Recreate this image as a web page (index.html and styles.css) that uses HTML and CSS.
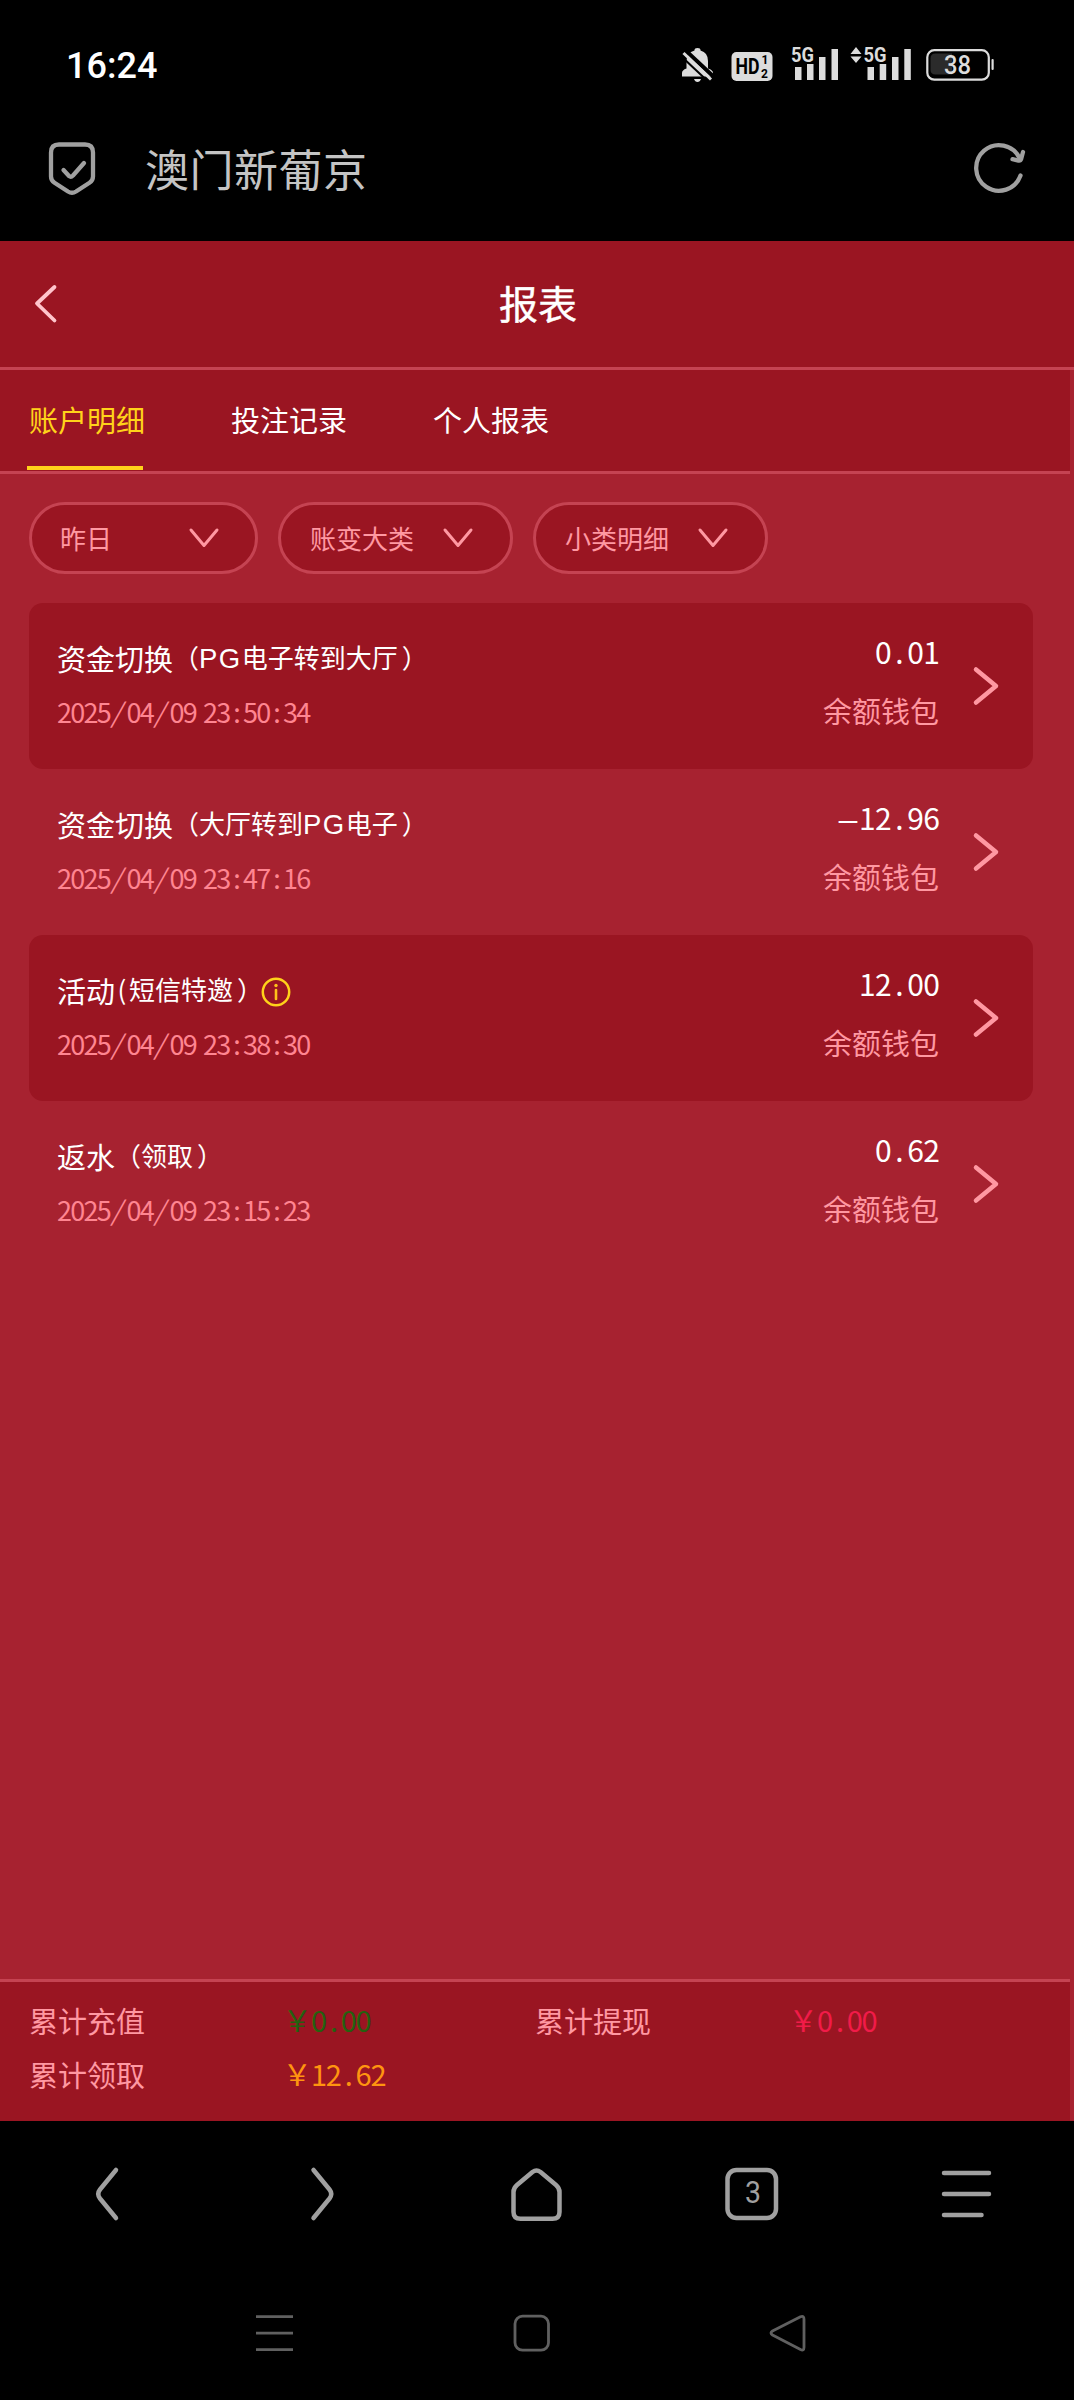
FILE: index.html
```html
<!DOCTYPE html>
<html lang="zh-CN">
<head>
<meta charset="utf-8">
<title>报表</title>
<link rel="stylesheet" href="styles.css">
</head>
<body>
<div class="status">
  <span class="clock">16:24</span>
  <svg class="status-icons" width="320" height="40" viewBox="680 44 320 40">
    <g fill="#dcdcdc">
      <path d="M682 76.500V73q0-3 4.500-4.500V61q0-8.500 8-10.500v-.5a3 2 0 0 1 6 0v.5q7.500 2 7.500 10.500v7.500q5 1.500 5 4.500v3.500zM694 79h7q-1 3-3.500 3t-3.500-3z"/>
      <path d="M684 49L715 78" stroke="#000" stroke-width="4"/>
      <path d="M682 57L707 80.500" stroke="#000" stroke-width="2"/>
      <path d="M683.500 53L711 79.500" stroke="#dcdcdc" stroke-width="3"/>
      <rect x="731.500" y="52" width="41" height="29" rx="5"/>
      <path d="M795 67h6.500v13H795zM807 64h6.500v16H807zM819 57h6.500v23H819zM831.500 49h6.500v31h-6.500zM867.500 67h6.500v13h-6.500zM879.700 64h6.500v16h-6.500zM892 57h6.500v23H892zM904.300 49h6.500v31h-6.500zM850.500 54l5.500-7 5.500 7zM850.500 56.500h11l-5.500 6.500z"/>
    </g>
    <g class="icon-text" fill="#dcdcdc">
      <text x="735.500" y="74" font-size="22" font-weight="700" fill="#000" textLength="24" lengthAdjust="spacingAndGlyphs">HD</text>
      <text x="761.500" y="64" font-size="12" font-weight="700" fill="#000">1</text>
      <text x="761" y="77.500" font-size="12" font-weight="700" fill="#000">2</text>
      <text x="791" y="61.500" font-size="21" font-weight="700" textLength="23" lengthAdjust="spacingAndGlyphs">5G</text>
      <text x="863.500" y="61.500" font-size="21" font-weight="700" textLength="23" lengthAdjust="spacingAndGlyphs">5G</text>
    </g>
    <rect x="927.300" y="50.200" width="61.500" height="29.500" rx="7" fill="none" stroke="#dcdcdc" stroke-width="2.200"/>
    <path d="M952 53.500v21h-16.500q-5 0-5-5v-11q0-5 5-5z" fill="#2b2b2b"/>
    <rect x="991.500" y="59" width="2.200" height="11" rx="1" fill="#dcdcdc"/>
    <text class="icon-text" x="944" y="73.500" font-size="25" font-weight="500" fill="#dcdcdc" textLength="27" lengthAdjust="spacingAndGlyphs">38</text>
  </svg>
</div>
<div class="address">
  <svg class="shield" width="54" height="60" viewBox="0 0 54 60" fill="none" stroke="#a0a0a0" stroke-width="4.300" stroke-linecap="round" stroke-linejoin="round">
    <path d="M13 5.500h26q8 0 8 8v24q0 4-3.500 6.200L30 52.500q-4 2.400-8 0L8.500 43.700Q5 41.500 5 37.500v-24q0-8 8-8z"/>
    <path d="M17.500 31l5.500 6q2 1.500 4-.5L38 24"/>
  </svg>
  <span class="site">澳门新葡京</span>
  <svg class="reload" width="60" height="60" viewBox="0 0 60 60" fill="none" stroke="#a0a0a0" stroke-width="4.300" stroke-linecap="round" stroke-linejoin="round">
    <path d="M51.500 37.500A22.800 22.800 0 1 1 50.500 20"/>
    <path d="M43.500 21.200l6 1.400q2 .3 2.600-1.500L54 14"/>
  </svg>
</div>
<main class="page">
  <header class="titlebar">
    <svg class="back" width="30" height="44" viewBox="0 0 30 44" fill="none" stroke="#ffc5cc" stroke-width="3.800" stroke-linecap="round" stroke-linejoin="round"><path d="M25.500 5L8 21.500 25.500 38.500"/></svg>
    <h1>报表</h1>
  </header>
  <nav class="tabs">
    <a class="tab active">账户明细</a>
    <a class="tab">投注记录</a>
    <a class="tab">个人报表</a>
  </nav>
  <div class="filters">
    <button class="pill short"><span>昨日</span><svg width="34" height="24" viewBox="0 0 34 24"><path d="M4 4l13 15.500L30 4"/></svg></button>
    <button class="pill"><span>账变大类</span><svg width="34" height="24" viewBox="0 0 34 24"><path d="M4 4l13 15.500L30 4"/></svg></button>
    <button class="pill"><span>小类明细</span><svg width="34" height="24" viewBox="0 0 34 24"><path d="M4 4l13 15.500L30 4"/></svg></button>
  </div>
  <section class="list">
    <article class="row dark">
      <div class="what">
        <div class="name">资金切换<small>（<span class="latin">PG</span>电子转到大厅<span class="close">）</span></small></div>
        <div class="time">2025<i class="sl">/</i>04<i class="sl">/</i>09<i class="sp"> </i>23<i class="co">:</i>50<i class="co">:</i>34</div>
      </div>
      <div class="sum"><div class="amount">0<i>.</i>01</div><div class="wallet">余额钱包</div></div>
      <svg class="go" width="34" height="46" viewBox="0 0 34 46"><path d="M7 6.500L27 23 7 39.500"/></svg>
    </article>
    <article class="row">
      <div class="what">
        <div class="name">资金切换<small>（大厅转到<span class="latin">PG</span>电子<span class="close">）</span></small></div>
        <div class="time">2025<i class="sl">/</i>04<i class="sl">/</i>09<i class="sp"> </i>23<i class="co">:</i>47<i class="co">:</i>16</div>
      </div>
      <div class="sum"><div class="amount"><b>–</b>12<i>.</i>96</div><div class="wallet">余额钱包</div></div>
      <svg class="go" width="34" height="46" viewBox="0 0 34 46"><path d="M7 6.500L27 23 7 39.500"/></svg>
    </article>
    <article class="row dark">
      <div class="what">
        <div class="name">活动<small><span class="open">(</span>短信特邀<span class="close">）</span></small><svg class="info" width="30" height="30" viewBox="0 0 30 30"><circle cx="15" cy="15" r="13.200" fill="none" stroke="#ffd21a" stroke-width="2.500"/><path d="M15 13v9" stroke="#ffc21a" stroke-width="2.600" stroke-linecap="round"/><circle cx="15" cy="8.500" r="1.700" fill="#ffc21a"/></svg></div>
        <div class="time">2025<i class="sl">/</i>04<i class="sl">/</i>09<i class="sp"> </i>23<i class="co">:</i>38<i class="co">:</i>30</div>
      </div>
      <div class="sum"><div class="amount">12<i>.</i>00</div><div class="wallet">余额钱包</div></div>
      <svg class="go" width="34" height="46" viewBox="0 0 34 46"><path d="M7 6.500L27 23 7 39.500"/></svg>
    </article>
    <article class="row">
      <div class="what">
        <div class="name">返水<small>（领取<span class="close">）</span></small></div>
        <div class="time">2025<i class="sl">/</i>04<i class="sl">/</i>09<i class="sp"> </i>23<i class="co">:</i>15<i class="co">:</i>23</div>
      </div>
      <div class="sum"><div class="amount">0<i>.</i>62</div><div class="wallet">余额钱包</div></div>
      <svg class="go" width="34" height="46" viewBox="0 0 34 46"><path d="M7 6.500L27 23 7 39.500"/></svg>
    </article>
  </section>
  <footer class="totals">
    <span>累计充值</span><span class="money green"><b>￥</b>0<i>.</i>00</span>
    <span>累计提现</span><span class="money pink"><b>￥</b>0<i>.</i>00</span>
    <span>累计领取</span><span class="money orange"><b>￥</b>12<i>.</i>62</span>
  </footer>
</main>
<nav class="toolbar">
  <svg width="60" height="60" viewBox="0 0 60 60"><path d="M39 6L23 25.500q-3.500 4.500 0 9L39 54"/></svg>
  <svg width="60" height="60" viewBox="0 0 60 60"><path d="M21.500 6l16 19.500q3.500 4.500 0 9L21.500 54"/></svg>
  <svg width="60" height="60" viewBox="0 0 60 60"><path d="M25.500 8q4-3 8 0L49 21q3.500 3 3.500 7v20q0 6.800-7 6.800h-32q-7 0-7-6.800V28q0-4 3.500-7z"/></svg>
  <svg width="60" height="60" viewBox="0 0 60 60"><rect x="5.500" y="6" width="48.500" height="48" rx="9"/><text class="icon-text count" x="31" y="39" font-size="31" font-weight="400" text-anchor="middle" textLength="16" lengthAdjust="spacingAndGlyphs">3</text></svg>
  <svg width="60" height="60" viewBox="0 0 60 60"><path d="M7 9h45M7 30h45M7 51h37.500"/></svg>
</nav>
<nav class="sysnav">
  <svg width="44" height="44" viewBox="0 0 44 44"><path d="M4 5.700h37M4 22.200h37M4 38.700h37"/></svg>
  <svg width="44" height="44" viewBox="0 0 44 44"><rect x="6" y="5.200" width="33.500" height="34" rx="7.500"/></svg>
  <svg width="44" height="44" viewBox="0 0 44 44"><path d="M34.500 5.700q3.500-1.500 3.500 2.500v28q0 4-3.500 2.300L6.500 24q-3-2 0-4z"/></svg>
</nav>
</body>
</html>
```
FILE: styles.css
```css
* { box-sizing: border-box; }
body {
  margin: 0;
  width: 1074px;
  height: 2400px;
  background: #000;
  color: #fff;
  font-family: "Noto Sans CJK SC", sans-serif;
  display: flex;
  flex-direction: column;
  overflow: hidden;
}
svg { display: block; flex: none; }
i, b { font-style: normal; font-weight: inherit; }
.icon-text { font-family: Roboto, sans-serif; }

.status {
  height: 128px;
  padding: 0 74px 0 66px;
  display: flex;
  justify-content: space-between;
}
.clock {
  font: 500 36px/42px Roboto, sans-serif;
  padding-top: 45px;
}
.status-icons { margin-top: 44px; }

.address {
  height: 113px;
  padding: 0 45px 0 46px;
  display: flex;
}
.shield { margin-top: 11px; }
.site {
  margin: 10px auto 0 45px;
  color: #c4c4c4;
  font-size: 44px;
  letter-spacing: .5px;
  line-height: 60px;
}
.reload { margin-top: 10px; }

.page {
  height: 1880px;
  background: #a72230;
  display: flex;
  flex-direction: column;
}
.titlebar {
  height: 129px;
  flex: none;
  background: #9a1522;
  border-bottom: 3px solid #c54352;
  display: grid;
  grid-template-columns: 77px 1fr 77px;
  align-items: center;
}
.back { margin-left: 29px; }
.titlebar h1 {
  margin: 0 0 4px 2px;
  font-size: 39px;
  line-height: 48px;
  font-weight: 400;
  -webkit-text-stroke: .4px #fff;
  text-align: center;
}
.tabs {
  width: 1070px;
  height: 104px;
  flex: none;
  padding-left: 27px;
  background: #9a1522;
  border-bottom: 3px solid #c54352;
  display: flex;
  gap: 86px;
}
.tab {
  width: 116px;
  height: 100px;
  padding: 27px 0 0 2px;
  font-size: 29px;
  line-height: 44px;
  white-space: nowrap;
}
.tab.active {
  color: #ffd21a;
  background: linear-gradient(#ffd21a, #ffd21a) bottom / 100% 4px no-repeat;
}

.filters {
  display: flex;
  gap: 20px;
  padding: 28px 0 0 29px;
}
.pill {
  width: 235px;
  height: 72px;
  padding: 0 35px 0 29px;
  border: 3px solid #c54352;
  border-radius: 36px;
  background: #9a1522;
  color: #ff98a2;
  font: 26px/40px "Noto Sans CJK SC", sans-serif;
  display: flex;
  justify-content: space-between;
  align-items: center;
}
.pill.short { width: 229px; padding: 0 34px 0 28px; }
.pill span { margin-top: -1px; }
.pill svg {
  fill: none;
  stroke: #ff98a2;
  stroke-width: 3;
  stroke-linecap: round;
  stroke-linejoin: round;
}

.list { margin: 29px 41px 0 29px; }
.row {
  height: 166px;
  padding: 0 31px 0 28px;
  border-radius: 14px;
  display: flex;
}
.row.dark { background: #9a1522; }
.what { flex: 1; padding-top: 33px; }
.name {
  height: 44px;
  font-size: 29px;
  line-height: 44px;
  display: flex;
}
.name small { font-size: 26px; line-height: 42px; }
.latin { font-family: "Liberation Sans", sans-serif; font-size: 27.500px; letter-spacing: 1.500px; }
.open { display: inline-block; width: 14px; text-align: center; }
.close { margin-left: 4px; }
.info { margin: 9px 0 0 -2px; }
.time {
  margin-top: 12px;
  color: #ff8591;
  font-size: 27px;
  line-height: 40px;
  letter-spacing: -1.750px;
  display: flex;
}
.time i { text-align: center; }
.sl { width: 16.500px; transform: skewX(-14deg); }
.co { width: 13.500px; }
.sp { width: 7px; }
.sum { text-align: right; }
.amount {
  margin-top: 26px;
  font-size: 30px;
  line-height: 44px;
  letter-spacing: -.8px;
  display: flex;
  justify-content: flex-end;
}
.amount i { width: 16.500px; text-align: center; }
.amount b { width: 23px; text-align: center; transform: scaleX(1.400); }
.wallet {
  margin-top: 15px;
  color: #ff98a2;
  font-size: 29px;
  line-height: 44px;
}
.go {
  margin: 60px -1px 0 30px;
  fill: none;
  stroke: #ff98a2;
  stroke-width: 4.500;
  stroke-linecap: round;
  stroke-linejoin: round;
}

.totals {
  width: 1070px;
  height: 142px;
  margin-top: auto;
  padding: 11px 0 0 29px;
  background: #9a1522;
  border-top: 3px solid #c54352;
  color: #ff98a2;
  font-size: 29px;
  line-height: 54px;
  display: grid;
  grid-template-columns: 253px 253px 253px 1fr;
  grid-template-rows: 54px 54px;
}
.money { margin-top: -1px; letter-spacing: -1.300px; display: flex; }
.money b { width: 29px; display: flex; justify-content: center; font-size: 29px; }
.money i { width: 15px; text-align: center; }
.green { color: #24610f; }
.pink { color: #f11b48; }
.orange { color: #ff9410; }

.toolbar {
  height: 146px;
  padding-top: 43px;
  display: grid;
  grid-template-columns: repeat(5, 1fr);
  justify-items: center;
}
.toolbar svg, .sysnav svg {
  fill: none;
  stroke: #a0a0a0;
  stroke-width: 4.500;
  stroke-linecap: round;
  stroke-linejoin: round;
}
.toolbar .count { fill: #a0a0a0; stroke: none; }
.sysnav {
  padding: 44px 0 0 252px;
  display: flex;
  gap: 213px;
}
.sysnav svg { stroke: #606060; stroke-width: 2.800; stroke-linecap: butt; }
```
